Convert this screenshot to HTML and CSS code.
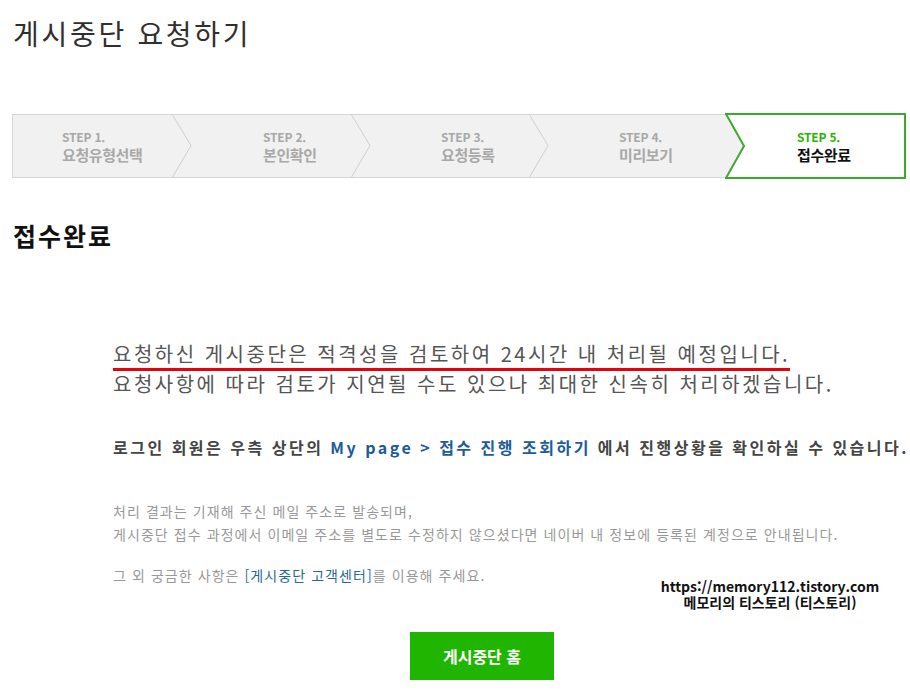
FILE: index.html
```html
<!DOCTYPE html>
<html lang="ko">
<head>
<meta charset="utf-8">
<title>게시중단 요청하기</title>
<link rel="stylesheet" href="styles.css">
</head>
<body>
<div class="page">
  <h1 class="title">게시중단 요청하기</h1>

  <ol class="steps">
    <li class="step first">
      <span class="step-no">STEP 1.</span>
      <span class="step-name">요청유형선택</span>
      <svg class="chev" width="22" height="64" viewBox="0 0 22 64"><polyline points="1,0 20,31.5 1,64" fill="none" stroke="#cfcfcf" stroke-width="1"/></svg>
    </li>
    <li class="step">
      <span class="step-no">STEP 2.</span>
      <span class="step-name">본인확인</span>
      <svg class="chev" width="22" height="64" viewBox="0 0 22 64"><polyline points="1,0 20,31.5 1,64" fill="none" stroke="#cfcfcf" stroke-width="1"/></svg>
    </li>
    <li class="step">
      <span class="step-no">STEP 3.</span>
      <span class="step-name">요청등록</span>
      <svg class="chev" width="22" height="64" viewBox="0 0 22 64"><polyline points="1,0 20,31.5 1,64" fill="none" stroke="#cfcfcf" stroke-width="1"/></svg>
    </li>
    <li class="step">
      <span class="step-no">STEP 4.</span>
      <span class="step-name">미리보기</span>
    </li>
    <li class="step active">
      <svg class="active-bg" width="181" height="65" viewBox="0 0 181 65" preserveAspectRatio="none"><polygon points="1,1 180,1 180,64 1,64 19,32.5" fill="#fff" stroke="#3aaa2a" stroke-width="2" stroke-linejoin="miter"/></svg>
      <span class="step-no">STEP 5.</span>
      <span class="step-name">접수완료</span>
    </li>
  </ol>

  <h2 class="section-title">접수완료</h2>

  <div class="result">
    <p class="lead"><span class="lead-first">요청하신 게시중단은 적격성을 검토하여 24시간 내 처리될 예정입니다.</span><br>요청사항에 따라 검토가 지연될 수도 있으나 최대한 신속히 처리하겠습니다.</p>

    <p class="login-note">로그인 회원은 우측 상단의 <span class="link">My page &gt; 접수 진행 조회하기</span> 에서 진행상황을 확인하실 수 있습니다.</p>

    <p class="small">처리 결과는 기재해 주신 메일 주소로 발송되며,<br>게시중단 접수 과정에서 이메일 주소를 별도로 수정하지 않으셨다면 네이버 내 정보에 등록된 계정으로 안내됩니다.</p>
    <p class="small">그 외 궁금한 사항은 <span class="small-link">[게시중단 고객센터]</span>를 이용해 주세요.</p>

    <div class="watermark">https://memory112.tistory.com<br>메모리의 티스토리 (티스토리)</div>
  </div>

  <div class="actions">
    <a class="btn-home">게시중단 홈</a>
  </div>
</div>
</body>
</html>
```
FILE: styles.css
```css
* { box-sizing: border-box; }
html, body { margin: 0; padding: 0; background: #fff; }
body {
  font-family: "Noto Sans CJK KR", "Noto Sans", sans-serif;
  color: #333;
}
.page {
  width: 910px;
  padding: 0 5px 0 12px;
}
.title {
  margin: 14px 0 0 1px;
  font-size: 28px;
  line-height: 38px;
  font-weight: 400;
  color: #2f2f2f;
  letter-spacing: 2.7px;
}
.steps {
  list-style: none;
  margin: 62px 0 0 0;
  padding: 0;
  display: grid;
  grid-template-columns: 179px 178px 178px 178px 1fr;
  height: 64px;
  width: 893px;
  border: 1px solid #d6d6d6;
  background: #f1f1f1;
  position: relative;
}
.step {
  position: relative;
  padding: 15px 0 0 71px;
  display: flex;
  flex-direction: column;
}
.step.first { padding-left: 49px; }
.step-no {
  font-size: 12px;
  line-height: 14px;
  font-weight: 700;
  color: #a8a8a8;
  letter-spacing: -0.2px;
}
.step-name {
  font-size: 15px;
  line-height: 22px;
  font-weight: 700;
  color: #a8a8a8;
  letter-spacing: -0.4px;
}
.chev {
  position: absolute;
  right: -2px;
  top: -1px;
  height: 64px;
  z-index: 1;
}
.step:nth-child(1) .chev { right: -1px; }
.step.active { padding-left: 71px; }
.active-bg {
  position: absolute;
  left: -1px;
  top: -2px;
  width: 181px;
  height: 66px;
}
.step.active .step-no, .step.active .step-name { position: relative; }
.step.active .step-no { color: #2db400; }
.step.active .step-name { color: #111; }

.section-title {
  margin: 42px 0 0 1px;
  font-size: 25px;
  line-height: 30px;
  font-weight: 700;
  color: #111;
  letter-spacing: 2px;
}
.result {
  position: relative;
  padding-left: 101px;
}
.lead {
  margin: 89px 0 0 0;
  font-size: 20px;
  line-height: 30px;
  color: #555;
  letter-spacing: 2.5px;
  white-space: nowrap;
}
.lead-first {
  border-bottom: 3px solid #e8000b;
  padding-bottom: 0;
}
.login-note {
  margin: 37px 0 0 0;
  font-size: 16px;
  line-height: 22px;
  font-weight: 700;
  color: #444;
  letter-spacing: 2.5px;
  white-space: nowrap;
}
.link { color: #1d5b9a; }
.small {
  margin: 0;
  font-size: 14px;
  line-height: 23px;
  color: #999;
  letter-spacing: 1.07px;
  white-space: nowrap;
}
.login-note + .small { margin-top: 42px; }
.small + .small { margin-top: 18px; }
.small-link { color: #1f6b8f; }
.watermark {
  position: absolute;
  left: 648px;
  top: 239px;
  width: 220px;
  text-align: center;
  font-size: 14px;
  line-height: 16px;
  font-weight: 700;
  color: #111;
  text-shadow: 1px 0 0 #fff, -1px 0 0 #fff, 0 1px 0 #fff, 0 -1px 0 #fff, 1px 1px 0 #fff, -1px -1px 0 #fff, 1px -1px 0 #fff, -1px 1px 0 #fff, 0 0 2px #fff;
}
.actions {
  display: flex;
  margin-top: 45px;
  padding-left: 398px;
}
.btn-home {
  display: block;
  width: 144px;
  height: 48px;
  line-height: 48px;
  text-align: center;
  background: #1fb500;
  color: #fff;
  font-size: 16px;
  font-weight: 700;
}
```
